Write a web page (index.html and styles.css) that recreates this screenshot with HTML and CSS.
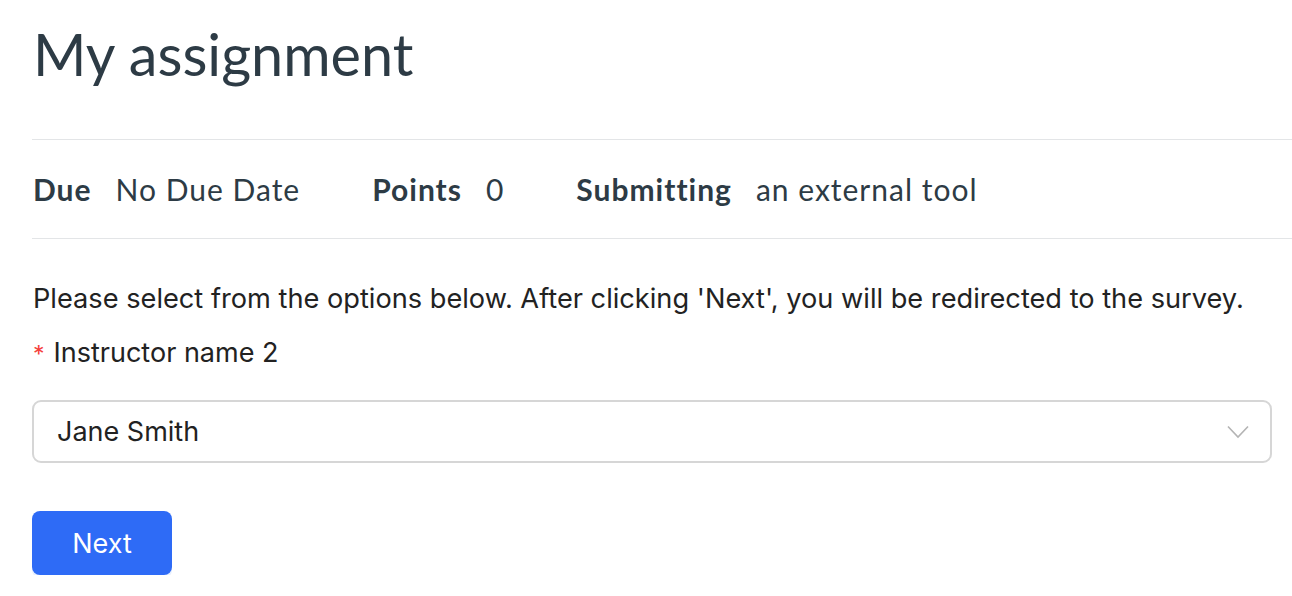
FILE: index.html
```html
<!DOCTYPE html>
<html lang="en">
<head>
<meta charset="utf-8">
<title>My assignment</title>
<link rel="stylesheet" href="styles.css">
</head>
<body>
<main class="page">
  <h1 class="title">My assignment</h1>
  <div class="meta">
    <div class="meta-item"><span class="meta-label">Due</span><span class="meta-value">No Due Date</span></div>
    <div class="meta-item"><span class="meta-label">Points</span><span class="meta-value">0</span></div>
    <div class="meta-item"><span class="meta-label">Submitting</span><span class="meta-value">an external tool</span></div>
  </div>
  <form class="form">
    <p class="intro">Please select from the options below. After clicking 'Next', you will be redirected to the survey.</p>
    <label class="field-label"><span class="req">*</span>Instructor name 2</label>
    <div class="select">
      <span class="select-value">Jane Smith</span>
      <svg class="chevron" width="22" height="14" viewBox="0 0 22 14" aria-hidden="true"><path d="M1 1.5 L11 12 L21 1.5" fill="none" stroke="#b4b4b4" stroke-width="1.6"/></svg>
    </div>
    <div class="actions"><button type="button" class="btn">Next</button></div>
  </form>
</main>
</body>
</html>
```

FILE: styles.css
```css
* { box-sizing: border-box; }
html, body { margin: 0; padding: 0; background: #fff; }
body { font-family: Lato, "Noto Sans", sans-serif; color: #2d3b45; }
.page { padding: 0 0 0 32px; }
.title {
  margin: 0;
  padding: 18px 0 0 1px;
  font-family: Lato, sans-serif;
  font-weight: 400;
  font-size: 57.6px;
  line-height: 72px;
  height: 140px;
  border-bottom: 1px solid #e3e5e7;
}
.meta {
  display: flex;
  align-items: center;
  height: 99px;
  border-bottom: 1px solid #e3e5e7;
  padding-left: 1px;
  font-size: 30px;
  letter-spacing: 1px;
}
.meta-item { display: flex; margin-right: 72px; }
.meta-label { font-weight: 700; margin-right: 24px; }
.form {
  font-family: Inter, "Noto Sans", sans-serif;
  color: #222;
  padding-right: 20px;
}
.intro {
  margin: 0;
  padding-top: 44px;
  padding-left: 1px;
  font-size: 27.2px;
  line-height: 32px;
}
.field-label {
  display: flex;
  align-items: baseline;
  margin-top: 22px;
  padding-left: 1px;
  font-size: 27px;
  line-height: 32px;
}
.req { color: #f5413c; margin-right: 9px; font-size: 23px; }
.select {
  margin-top: 30px;
  height: 63px;
  border: 2px solid #d6d6d6;
  border-radius: 9px;
  display: flex;
  align-items: center;
  justify-content: space-between;
  padding: 0 21px 0 23px;
  font-size: 27px;
}
.chevron { display: block; }
.actions { margin-top: 48px; }
.btn {
  font-family: Inter, "Noto Sans", sans-serif;
  font-size: 27px;
  color: #fff;
  background: #2e6bf6;
  border: none;
  border-radius: 8px;
  width: 140px;
  height: 64px;
  box-shadow: 0 3px 0 #e8f0fe;
  padding: 0;
}
```
